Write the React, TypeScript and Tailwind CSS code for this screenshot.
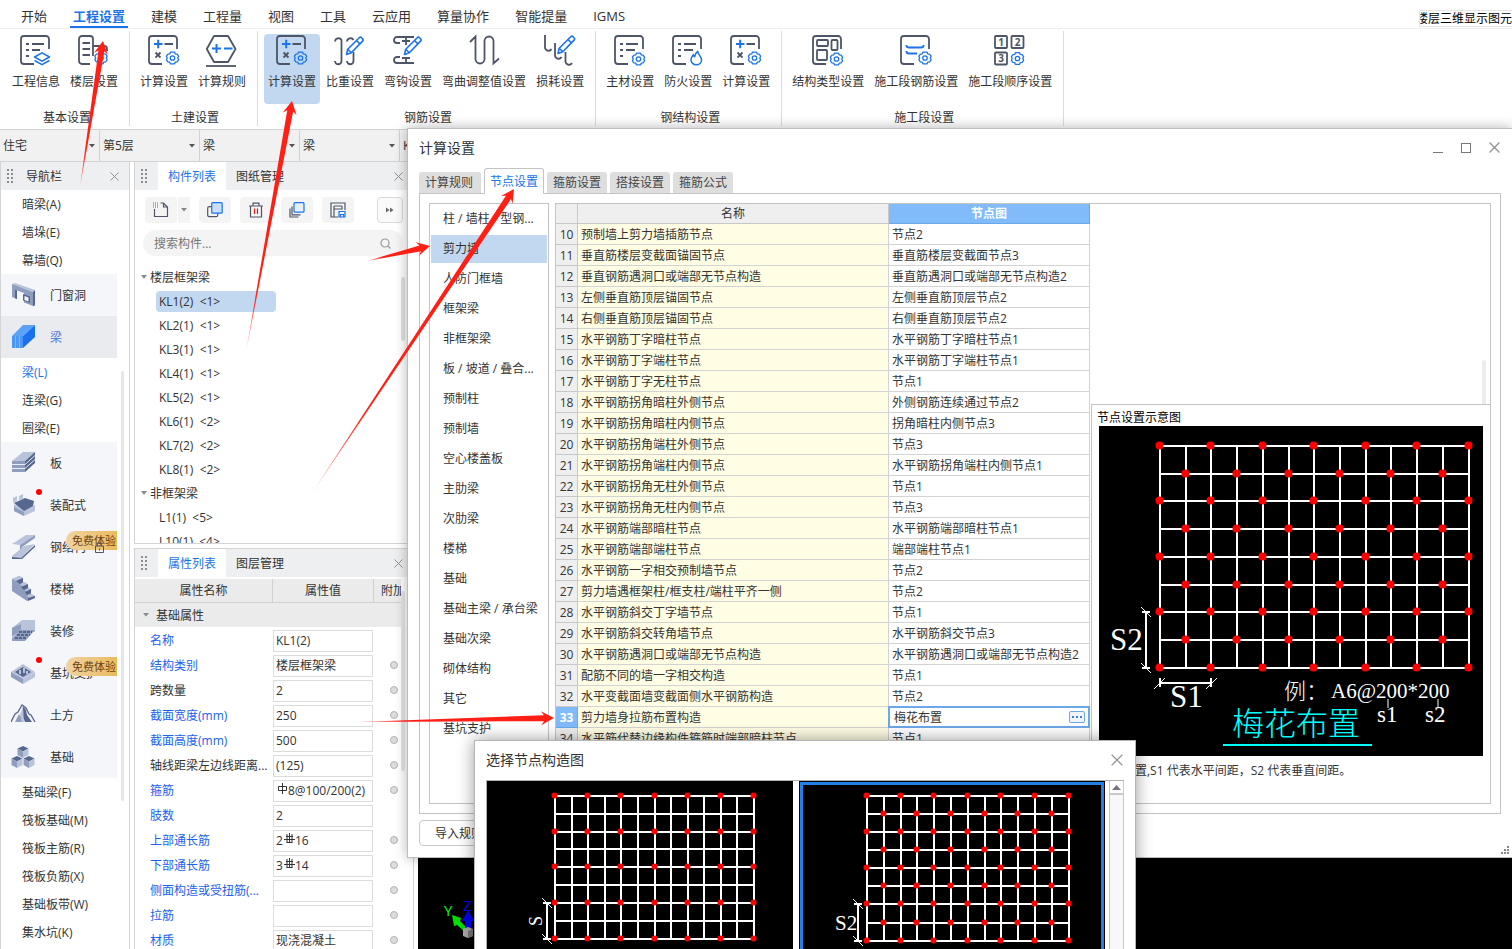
import React from 'react';
import { clsx } from 'clsx';

const INK = '#4d5566';
const BLUE = '#1a73e8';

/* ---------- shared icon parts ---------- */

const Gear: React.FC<{ x: number; y: number }> = ({ x, y }) => (
  <g transform={`translate(${x} ${y})`} stroke={BLUE} strokeWidth="1.3" fill="none" strokeLinejoin="round">
    <path d="M-2.1-5.8h4.2l.7 1.7 1.8.3 1.5 2-.8 1.8.8 1.8-1.5 2-1.8.3-.7 1.7h-4.2l-.7-1.7-1.8-.3-1.5-2 .8-1.8-.8-1.8 1.5-2 1.8-.3z" />
    <circle r="2.2" />
  </g>
);

const Pencil = () => (
  <g stroke={BLUE} fill="#fff" strokeWidth="1.6" strokeLinejoin="round">
    <path d="M12.5 20.5l1.2-5.2L25.5 3.5c1.2-1.2 4.6 2 3.3 3.4L17.3 18.8z" />
    <path d="M22.5 6.5l3.6 3.6M13.7 15.3l3.6 3.5" />
  </g>
);

const Frame = () => <path d="M29 15V5a3 3 0 0 0-3-3H4a3 3 0 0 0-3 3v22a3 3 0 0 0 3 3h10" />;

const Svg32: React.FC<{ children: React.ReactNode }> = ({ children }) => (
  <svg width="32" height="34" viewBox="0 0 32 34" fill="none" stroke={INK} strokeWidth="1.8">
    {children}
  </svg>
);

const InfoIcon = () => (
  <Svg32>
    <Frame />
    <path d="M6 10h3M12 10h12M6 16h3M12 16h8M6 22h3" />
    <path d="M14.500 23l7.500-4.200 7.500 4.200-7.500 4.200z M14.500 26.500l7.500 4.200 7.500-4.200" stroke={BLUE} strokeWidth="1.5" strokeLinejoin="round" />
  </Svg32>
);

const FloorIcon = () => (
  <Svg32>
    <path d="M12 30H4a3 3 0 0 1-3-3V5a3 3 0 0 1 3-3h8a3 3 0 0 1 3 3v17M15 12h11a3 3 0 0 1 3 3v2" />
    <path d="M4.500 9h7.500M4.500 15h7.500M4.500 21h7.500" />
    <Gear x={23} y={24} />
  </Svg32>
);

const CalcIcon = () => (
  <Svg32>
    <Frame />
    <path d="M6 10h8.500M10.200 5.700v8.600" stroke={BLUE} strokeWidth="2" />
    <path d="M16.500 10H25M7.500 18.500l5 5M12.500 18.500l-5 5" />
    <Gear x={24.500} y={24} />
  </Svg32>
);

const RuleIcon = () => (
  <Svg32>
    <path d="M8 2h14l7.500 13L22 28H8L.8 15z" strokeLinejoin="round" />
    <path d="M0 32h30" />
    <path d="M6 14.500h9M10.500 10v9M18 14.500h8.500" stroke={BLUE} strokeWidth="2" />
  </Svg32>
);

const WeightIcon = () => (
  <Svg32>
    <path d="M1 7.500A3.500 3.500 0 0 1 7.500 6v21a3.200 3.200 0 0 1-6.500 0" />
    <path d="M13 7.500A3.500 3.500 0 0 1 19.500 6M19.500 18v9a3.200 3.200 0 0 1-6.500 0" />
    <Pencil />
  </Svg32>
);

const HookIcon = () => (
  <Svg32>
    <path d="M22 3H5a3 3 0 0 0 0 6h3M8 23H5a3 3 0 0 0 0 6h17M14 3v8M10 7h8M14 24v5M10 24h8" />
    <Pencil />
  </Svg32>
);

const BendIcon = () => (
  <Svg32>
    <path d="M2 8l5.500-5.500V25a4.500 4.500 0 0 0 9 0V7a4.500 4.500 0 0 1 9 0v22.500l5.500-5" />
  </Svg32>
);

const LossIcon = () => (
  <Svg32>
    <path d="M1 1v12a3.500 3.500 0 0 0 6.500 2M11 9v12a3.500 3.500 0 0 0 6.500 2M21.500 18v9a3.500 3.500 0 0 0 6.500 2" />
    <g transform="translate(1.500 -1)">
      <Pencil />
    </g>
  </Svg32>
);

const MaterialIcon = () => (
  <Svg32>
    <Frame />
    <path d="M6 10h3M12 10h12M6 16h3M12 16h9M6 22h3" />
    <Gear x={24.500} y={25} />
  </Svg32>
);

const FireIcon = () => (
  <Svg32>
    <Frame />
    <path d="M6 10h3M12 10h12M6 16h3M12 16h9M6 22h3" />
    <path d="M19 26c0-2.500 1.200-4 2.500-5.500 0 1.200.5 2 1.200 2.300.2-2.500 1.300-4.300 3-5.500 0 3 3.800 5 3.800 8.700 0 2.700-2.300 4.800-5.200 4.800S19 28.700 19 26z" stroke={BLUE} strokeWidth="1.5" strokeLinejoin="round" />
  </Svg32>
);

const StructIcon = () => (
  <Svg32>
    <Frame />
    <rect x="5" y="6" width="11" height="6" rx="1" />
    <rect x="19.500" y="6" width="6" height="10" rx="1" />
    <rect x="5" y="16" width="10" height="10" rx="1" />
    <Gear x={24.500} y={25} />
  </Svg32>
);

const StageRebarIcon = () => (
  <Svg32>
    <Frame />
    <path d="M6.500 11c0 2.500 1 2.500 2.500 2.500h12c1.500 0 2.500 0 2.500-2.500M6.500 17c0 2.500 1 2.500 2.500 2.500h8" stroke={BLUE} strokeWidth="2" />
    <Gear x={25} y={24} />
  </Svg32>
);

const StageOrderIcon = () => (
  <Svg32>
    <rect x="1" y="2" width="12" height="12" rx="1" />
    <rect x="17.500" y="2" width="12" height="12" rx="1" />
    <rect x="1" y="18.500" width="12" height="12" rx="1" />
    <g fill={INK} stroke="none" fontSize="10" fontWeight="700" fontFamily="Open Sans, sans-serif" textAnchor="middle">
      <text x="7" y="12">1</text>
      <text x="23.500" y="12">2</text>
      <text x="7" y="28">3</text>
    </g>
    <Gear x={23.500} y={24.500} />
  </Svg32>
);

/* ---------- ribbon ---------- */

const menus = ['开始', '工程设置', '建模', '工程量', '视图', '工具', '云应用', '算量协作', '智能提量', 'IGMS'];

const ribbon = [
  { title: '基本设置', items: [['工程信息', InfoIcon], ['楼层设置', FloorIcon]] },
  { title: '土建设置', items: [['计算设置', CalcIcon], ['计算规则', RuleIcon]] },
  {
    title: '钢筋设置',
    active: '计算设置',
    items: [['计算设置', CalcIcon], ['比重设置', WeightIcon], ['弯钩设置', HookIcon], ['弯曲调整值设置', BendIcon], ['损耗设置', LossIcon]],
  },
  { title: '钢结构设置', items: [['主材设置', MaterialIcon], ['防火设置', FireIcon], ['计算设置', CalcIcon]] },
  { title: '施工段设置', items: [['结构类型设置', StructIcon], ['施工段钢筋设置', StageRebarIcon], ['施工段顺序设置', StageOrderIcon]] },
] as { title: string; active?: string; items: [string, React.FC][] }[];

const MenuBar = () => (
  <nav className="flex h-[29px] shrink-0 items-stretch justify-between border-b border-[#efefef] pl-[18px]">
    <div className="flex gap-5">
      {menus.map((m) => (
        <button
          key={m}
          className={clsx(
            'px-[3px] pt-1.5 text-[13px] leading-5 whitespace-nowrap border-b-2',
            m === '工程设置' ? 'border-[#1a73e8] font-bold text-[#1a73e8]' : 'border-transparent'
          )}
        >
          {m}
        </button>
      ))}
    </div>
    <div className="mt-[10px] flex h-[17px] w-[93px] justify-end overflow-hidden border border-r-0 border-[#e4e4e4] text-xs leading-4 whitespace-nowrap text-black">
      楼层三维显示图元
    </div>
  </nav>
);

const Ribbon = () => (
  <div className="flex h-[100px] shrink-0 pt-0.5 pb-1 pl-0.5">
    {ribbon.map((g) => (
      <section key={g.title} className="flex h-[95px] flex-col justify-between border-r border-[#dcdcdc] pt-[3px] pr-[7px] pl-1.5">
        <div className="flex gap-0.5">
          {g.items.map(([label, Icon]) => (
            <button
              key={label}
              className={clsx('flex h-[70px] flex-col items-center rounded-sm px-1 text-xs leading-4', g.active === label && 'bg-[#c1d8f0]')}
            >
              <Icon />
              <span className="mt-1.5 whitespace-nowrap">{label}</span>
            </button>
          ))}
        </div>
        <h2 className="pl-1 text-center text-xs leading-4">{g.title}</h2>
      </section>
    ))}
  </div>
);

const combos = ['住宅', '第5层', '梁', '梁', 'KL1(2)'];

const ComboBar = () => (
  <div className="flex h-[33px] shrink-0 border-y border-[#d2d2d2] bg-[#f1f1f1]">
    {combos.map((c, i) => (
      <label key={i} className="flex w-[100px] shrink-0 items-center border-r border-[#d2d2d2] pr-1 pl-[3px]">
        <select aria-label={c} className="min-w-0 flex-1 appearance-none bg-transparent text-xs outline-none">
          <option>{c}</option>
        </select>
        <svg width="6" height="4" viewBox="0 0 6 4" fill="#555">
          <path d="M0 0h6L3 3.500z" />
        </svg>
      </label>
    ))}
  </div>
);

/* ---------- left navigation ---------- */

const L = '#b9c3d9';
const M = '#8f9dbf';
const D = '#56678f';

const navIcons: Record<string, React.ReactNode> = {
  门窗洞: (
    <>
      <path d="M1 2l3-1 20 7-2 2z" fill={L} />
      <path d="M1 2l21 8v14l-9-3.500V11L6 8.500V17l-5-2z" fill={M} />
      <path d="M22 10l2-2v15l-2 1.500zM4 8l2 .500V17l-2-.700z" fill={D} />
      <path d="M12 12l7 2.500V21l-7-2.500z" fill={D} />
      <path d="M13.500 14l4 1.500v4l-4-1.500z" fill="#f5f6f9" />
    </>
  ),
  梁: (
    <>
      <path d="M1 12L12 1h12L12 12z" fill="#5aa2f7" />
      <path d="M1 12h11v12H1z" fill="#4a97f5" />
      <path d="M12 12L24 1v12L12 24z" fill="#1a70ec" />
      <path d="M4.500 12v12M8.500 12v12" stroke="#7db8ff" />
    </>
  ),
  板: (
    <>
      <path d="M1 11L12 2h12L14 11z" fill={L} />
      <path d="M1 11h13v11H1z" fill={M} />
      <path d="M14 11l10-9v11l-10 9z" fill={D} />
      <path d="M1 14.500h13l10-9M1 18.500h13l10-9" stroke="#e9edf6" fill="none" />
    </>
  ),
  装配式: (
    <>
      <path d="M3 12l10 5 11-4v6l-11 5-10-5z" fill={L} />
      <path d="M3 15l10 5v4L3 19z" fill={M} />
      <path d="M3 11l11-5 9 3-1 5-9 5z" fill={D} />
      <path d="M2 6l4-2v5l-4 2zM8 4l4-2v5L8 9z" fill={L} />
    </>
  ),
  钢结构: (
    <>
      <path d="M1 10L15 1h9L9 11z" fill={L} />
      <path d="M9 11L24 1v3L11 13v6L9 21z" fill={M} />
      <path d="M1 22L13 12l11-2L10 24H1z" fill={L} />
      <path d="M10 24l14-13v2L11 25H1v-2z" fill={D} />
    </>
  ),
  楼梯: (
    <>
      <path d="M1 3l7-3 4 2v4l4 2v4l4 2v4l4 2-8 5L1 15z" fill={M} />
      <path d="M1 3l7-3 4 2-7 3zM9 8l4-2 4 2-5 3zM13 13l4-2 4 3-5 2zM16 19l4-1 4 3-6 2z" fill={L} />
      <path d="M5 5l7-3v4L9 8zM10 11l7-3v4l-4 2zM14 16l6-3v4l-4 2zM17 25v-3l7-2v2z" fill={D} />
    </>
  ),
  装修: (
    <>
      <path d="M1 10L11 2h13v12H11L1 18z" fill={L} />
      <path d="M1 10l9-4v6l-9 7z" fill={M} />
      <path d="M1 20l9-8h14L14 23H1z" fill={M} />
      <path d="M8 14h13M6 17h13M4 20h12" stroke={D} strokeWidth="1.800" strokeDasharray="3 1" />
    </>
  ),
  基坑支护: (
    <>
      <path d="M0 12l12-8 12 8-12 7z" fill={L} />
      <path d="M4 12l8-5 8 5-8 5z" fill={D} />
      <path d="M0 12l12 7v5L0 17z" fill={M} />
      <path d="M12 19l12-7v5l-12 7z" fill={L} />
      <path d="M8 10h2v4H8zM12 8h2v5h-2zM15 11h2v3h-2z" fill={L} />
    </>
  ),
  土方: (
    <>
      <path d="M0 20l4-8 3-2 4-7 4 3 3 6 2 1 4 7" stroke={D} fill="none" strokeWidth="1.300" />
      <path d="M12 4l3 4 1 5 5 7h-7l-3-7z" fill={D} />
      <path d="M4 20l4-8 2 3 1 5z" fill={M} />
      <path d="M12 6l-3 6 2 8h2z" fill={L} />
    </>
  ),
  基础: (
    <>
      {[[12, 2], [6, 12], [18, 12]].map(([x, y]) => (
        <g key={x} transform={`translate(${x} ${y})`}>
          <path d="M-5.500 2.500L0 0l5.500 2.500L0 5.500z" fill={D} />
          <path d="M-5.500 2.500L0 5.500V12l-5.500-3z" fill={M} />
          <path d="M5.500 2.500L0 5.500V12l5.500-3z" fill={L} />
        </g>
      ))}
    </>
  ),
};

type NavRow = { name: string; leaf?: boolean; dot?: boolean; trial?: boolean; lock?: boolean };

const navRows: NavRow[] = [
  { name: '暗梁(A)', leaf: true },
  { name: '墙垛(E)', leaf: true },
  { name: '幕墙(Q)', leaf: true },
  { name: '门窗洞' },
  { name: '梁' },
  { name: '梁(L)', leaf: true },
  { name: '连梁(G)', leaf: true },
  { name: '圈梁(E)', leaf: true },
  { name: '板' },
  { name: '装配式', dot: true },
  { name: '钢结构', trial: true, lock: true },
  { name: '楼梯' },
  { name: '装修' },
  { name: '基坑支护', dot: true, trial: true },
  { name: '土方' },
  { name: '基础' },
  { name: '基础梁(F)', leaf: true },
  { name: '筏板基础(M)', leaf: true },
  { name: '筏板主筋(R)', leaf: true },
  { name: '筏板负筋(X)', leaf: true },
  { name: '基础板带(W)', leaf: true },
  { name: '集水坑(K)', leaf: true },
];

const Grip = () => (
  <svg width="8" height="14" viewBox="0 0 8 14" fill="#8b8b8b" className="shrink-0">
    {[0, 4, 8, 12].map((y) => (
      <g key={y}>
        <rect y={y} width="2" height="2" />
        <rect x="4" y={y} width="2" height="2" />
      </g>
    ))}
  </svg>
);

const Cross: React.FC<{ size?: number }> = ({ size = 9 }) => (
  <svg width={size} height={size} viewBox="0 0 10 10" stroke="#909090" strokeWidth="1.100">
    <path d="M.5.5l9 9M9.500.5l-9 9" />
  </svg>
);

const NavPanel = () => (
  <aside className="flex w-[130px] shrink-0 flex-col border-x border-[#d4d4d6]">
    <header className="flex h-7 shrink-0 items-center bg-[#eeeff1] pr-2.5 pl-1.5">
      <Grip />
      <h2 className="ml-[11px] flex-1 pt-px text-xs">导航栏</h2>
      <button aria-label="关闭">
        <Cross />
      </button>
    </header>
    <div className="flex min-h-0 flex-1">
      <ul className="w-[116px] overflow-hidden">
        {navRows.map((r) =>
          r.leaf ? (
            <li key={r.name} className={clsx('h-7 pl-[21px] text-xs leading-[29px]', r.name === '梁(L)' && 'text-[#1a73e8]')}>
              {r.name}
            </li>
          ) : (
            <li
              key={r.name}
              className={clsx(
                'relative flex h-[42px] items-center pl-2.5 text-xs whitespace-nowrap',
                r.name === '梁' ? 'bg-[#eaebef] text-[#4a78d8]' : 'bg-[#f5f6f9]'
              )}
            >
              <svg width="25" height="26" viewBox="0 0 25 26" fill="none">
                {navIcons[r.name]}
              </svg>
              <span className="ml-3.5 pt-0.5">{r.name}</span>
              {r.dot && <i className="absolute top-[5px] left-[35px] size-1.5 rounded-full bg-[#ff0000]" />}
              {r.trial && (
                <span className="absolute top-[5px] right-0 h-[19px] w-[51px] rounded-l-full bg-gradient-to-r from-[#f1d3a0] to-[#eabb5c] pl-1.5 text-[11px] leading-5 text-[#6d4311]">
                  免费体验
                </span>
              )}
              {r.lock && (
                <svg width="9" height="11" viewBox="0 0 9 11" fill="none" stroke={INK} className="absolute top-[16px] left-[94px]">
                  <path d="M2.500 4V2.500a2 2 0 0 1 4 0V4M.5 4h8v6.500h-8zM4.500 6.500v2" />
                </svg>
              )}
            </li>
          )
        )}
      </ul>
      <div className="mt-[181px] ml-1 h-[430px] w-[3px] rounded-full bg-[#e6e6e6]" />
    </div>
  </aside>
);

/* ---------- component list ---------- */

const PanelTabs: React.FC<{ tabs: [string, string] }> = ({ tabs }) => (
  <header className="flex h-7 shrink-0 items-center bg-[#eeeff1] pr-2.5 pl-1.5 text-xs">
    <Grip />
    <button className="ml-[9px] h-full bg-white px-2.5 pt-0.5 text-[#1a73e8]">{tabs[0]}</button>
    <button className="ml-2.5 pt-0.5">{tabs[1]}</button>
    <button aria-label="关闭" className="ml-auto">
      <Cross />
    </button>
  </header>
);

const toolBtn = 'flex h-[26px] w-8 items-center justify-center rounded-sm bg-[#f4f4f5]';

const Toolbar = () => (
  <div className="flex h-[26px] items-center pr-2.5">
    <button aria-label="新建" className={toolBtn}>
      <svg width="16" height="16" viewBox="0 0 16 16" fill="none" stroke={INK} strokeWidth="1.200">
        <path d="M1.500 7v7.500h13V5l-4-4H7.500M10.500 1v4h4" />
        <path d="M0 1h5M0 3h5M0 5h5" stroke={BLUE} strokeDasharray="1 1" />
      </svg>
    </button>
    <button aria-label="新建选项" className="ml-px flex h-[26px] w-3 items-center justify-center bg-[#f4f4f5]">
      <svg width="6" height="4" viewBox="0 0 6 4" fill="#888">
        <path d="M0 0h6L3 3.500z" />
      </svg>
    </button>
    <button aria-label="复制" className={clsx(toolBtn, 'ml-[9px]')}>
      <svg width="16" height="16" viewBox="0 0 16 16" strokeWidth="1.200">
        <rect x=".7" y="4.700" width="10" height="10" rx="1.500" fill="none" stroke={INK} />
        <rect x="4.700" y=".7" width="10.500" height="10.500" rx="1" fill="#c9defa" stroke={BLUE} />
      </svg>
    </button>
    <button aria-label="删除" className={clsx(toolBtn, 'ml-[9px]')}>
      <svg width="16" height="16" viewBox="0 0 16 16" fill="none" stroke={INK} strokeWidth="1.200">
        <path d="M1 4h14M5 4V1.200h6V4M2.500 4v11h11V4" />
        <path d="M6.500 6.500v5.500M9.500 6.500v5.500" stroke="#e02020" />
      </svg>
    </button>
    <button aria-label="层间复制" className={clsx(toolBtn, 'ml-[9px]')}>
      <svg width="16" height="16" viewBox="0 0 16 16" strokeWidth="1.200" fill="none" stroke={INK}>
        <path d="M3 4.500v8.300h8.500M1 6.500v8.500h8.500" />
        <rect x="5" y=".7" width="10" height="9.500" rx="1" fill="#e6f0fd" stroke={BLUE} />
      </svg>
    </button>
    <button aria-label="存档" className={clsx(toolBtn, 'ml-[9px]')}>
      <svg width="16" height="16" viewBox="0 0 16 16" fill="none" stroke={INK} strokeWidth="1.200">
        <path d="M15 8V1H1v14h7M4 4v11M4 7h8V4M4 4h8" />
        <path d="M9 9.500h6v5.500H9zM10.500 15v-2.500h3V15" stroke={BLUE} />
      </svg>
    </button>
    <button aria-label="更多" className="ml-auto flex size-[26px] items-center justify-center rounded-sm border border-[#dadada] bg-[#fafafa]">
      <svg width="8" height="6" viewBox="0 0 8 6" fill="#666">
        <path d="M0 .5L3.500 3 0 5.500zM4 .5L7.500 3 4 5.500z" />
      </svg>
    </button>
  </div>
);

const beams = ['KL1(2)  <1>', 'KL2(1)  <1>', 'KL3(1)  <1>', 'KL4(1)  <1>', 'KL5(2)  <1>', 'KL6(1)  <2>', 'KL7(2)  <2>', 'KL8(1)  <2>'];

const TreeGroup: React.FC<{ name: string; items: string[] }> = ({ name, items }) => (
  <li>
    <div className="flex h-6 items-center pl-1.5">
      <svg width="6" height="4" viewBox="0 0 6 4" fill="#8a8a8a">
        <path d="M0 0h6L3 4z" />
      </svg>
      <span className="ml-[3px] pt-0.5">{name}</span>
    </div>
    <ul>
      {items.map((b) => (
        <li key={b} className="flex h-6 items-center pl-[21px]">
          <span className={clsx('h-[21px] w-[120px] rounded-sm pl-[3px] leading-[21px] whitespace-pre', b === beams[0] && 'bg-[#c1d8f0]')}>{b}</span>
        </li>
      ))}
    </ul>
  </li>
);

const ComponentPanel = () => (
  <section className="flex h-[382px] shrink-0 flex-col border border-t-0 border-[#d4d4d6]">
    <PanelTabs tabs={['构件列表', '图纸管理']} />
    <div className="mt-[7px] pl-2.5">
      <Toolbar />
    </div>
    <label className="mt-[7px] mr-2.5 ml-2 flex h-[26px] shrink-0 items-center rounded-full bg-[#f4f4f4] pr-3 pl-[11px]">
      <input type="search" placeholder="搜索构件..." className="min-w-0 flex-1 bg-transparent pt-0.5 text-xs outline-none placeholder:text-[#777]" />
      <svg width="11" height="11" viewBox="0 0 11 11" fill="none" stroke="#999" strokeWidth="1.200">
        <circle cx="5" cy="5" r="4" />
        <path d="M8 8l2.500 2.500" />
      </svg>
    </label>
    <div className="mt-[9px] flex min-h-0 flex-1 justify-between overflow-hidden pr-2">
      <ul className="text-xs">
        <TreeGroup name="楼层框架梁" items={beams} />
        <TreeGroup name="非框架梁" items={['L1(1)  <5>', 'L10(1)  <4>']} />
      </ul>
      <div className="mt-3 h-16 w-1 rounded-full bg-[#e2e2e2]" />
    </div>
  </section>
);

/* ---------- property list ---------- */

type Prop = { name: string; value?: string; lead?: string; mark?: 'plain' | 'ribbed'; blue?: boolean; noFlag?: boolean };

const props: Prop[] = [
  { name: '名称', value: 'KL1(2)', blue: true, noFlag: true },
  { name: '结构类别', value: '楼层框架梁', blue: true },
  { name: '跨数量', value: '2' },
  { name: '截面宽度(mm)', value: '250', blue: true },
  { name: '截面高度(mm)', value: '500', blue: true },
  { name: '轴线距梁左边线距离...', value: '(125)' },
  { name: '箍筋', value: '8@100/200(2)', mark: 'plain', blue: true },
  { name: '肢数', value: '2', blue: true, noFlag: true },
  { name: '上部通长筋', value: '16', lead: '2', mark: 'ribbed', blue: true },
  { name: '下部通长筋', value: '14', lead: '3', mark: 'ribbed', blue: true },
  { name: '侧面构造或受扭筋(...', value: '', blue: true },
  { name: '拉筋', value: '', blue: true },
  { name: '材质', value: '现浇混凝土', blue: true },
];

const PropertyPanel = () => (
  <section className="mt-1 flex min-h-0 flex-1 flex-col overflow-hidden border border-b-0 border-[#d4d4d6]">
    <PanelTabs tabs={['属性列表', '图层管理']} />
    <div className="mt-0.5 flex min-h-0 flex-1 items-start text-xs">
      <table className="w-[266px] table-fixed border-separate border-spacing-0">
        <colgroup>
          <col className="w-[138px]" />
          <col className="w-[101px]" />
          <col />
        </colgroup>
        <thead>
          <tr className="h-6 bg-[#ebebeb]">
            <th className="border-r border-b border-[#d0d0d0] p-0 pt-px font-normal">属性名称</th>
            <th className="border-r border-b border-[#d0d0d0] p-0 pt-px font-normal">属性值</th>
            <th className="overflow-hidden border-b border-[#d0d0d0] p-0 pt-px pl-[7px] text-left font-normal whitespace-nowrap">附加</th>
          </tr>
        </thead>
        <tbody>
          <tr className="h-6 bg-[#ebebeb]">
            <td colSpan={3} className="p-0">
              <div className="flex items-center pl-2">
                <svg width="6" height="4" viewBox="0 0 6 4" fill="#8a8a8a">
                  <path d="M0 0h6L3 3.500z" />
                </svg>
                <span className="ml-[7px] pt-0.5">基础属性</span>
              </div>
            </td>
          </tr>
          {props.map((p, i) => (
            <tr key={p.name} className="h-[25px]">
              <td className={clsx('p-0 pt-0.5 pl-[15px] whitespace-nowrap', p.blue && 'text-[#1a62f0]')}>
                <label htmlFor={`prop-${i}`}>{p.name}</label>
              </td>
              <td className="p-0">
                <div className="mt-0.5 flex h-[22px] w-[100px] items-center border border-[#dcdcdc] bg-white pl-0.5">
                  {p.lead}
                  {p.mark && (
                    <svg width="11" height="11" viewBox="0 0 11 11" fill="none" stroke="#333" className="mb-1 ml-px shrink-0">
                      <path d={p.mark === 'plain' ? 'M1.500 3.500h8v4h-8zM5.500 0v11' : 'M2 3.500h7M0 6.500h11M3 1v8.500M5.500 0v10M8 1v8.500M2.500 9.500h6'} />
                    </svg>
                  )}
                  <input id={`prop-${i}`} defaultValue={p.value} className="min-w-0 flex-1 bg-transparent outline-none" />
                </div>
              </td>
              <td className="overflow-visible p-0">
                {!p.noFlag && (
                  <input
                    type="checkbox"
                    aria-label={`附加 ${p.name}`}
                    className="ml-4 block size-2 appearance-none rounded-full border border-[#b4b4b4] bg-[#dcdcdc]"
                  />
                )}
              </td>
            </tr>
          ))}
        </tbody>
      </table>
      <div className="mt-3 h-[180px] w-1 rounded-full bg-[#e6e6e6]" />
    </div>
  </section>
);

/* ---------- layout diagrams ---------- */

const SERIF = 'Liberation Serif, Noto Sans CJK SC, serif';

const Mesh: React.FC<{ xs: number[]; ys: number[]; r: number; quincunx?: boolean }> = ({ xs, ys, r, quincunx }) => (
  <g>
    <g stroke="#fff" strokeWidth="2">
      {xs.map((x) => (
        <path key={x} d={`M${x} ${ys[0]}V${ys[ys.length - 1]}`} />
      ))}
      {ys.map((y) => (
        <path key={y} d={`M${xs[0] - 1} ${y}H${xs[xs.length - 1] + 1}`} />
      ))}
    </g>
    <g fill="#ff0000">
      {ys.map((y, j) =>
        xs.map((x, i) => {
          const hit = quincunx ? i % 2 === j % 2 : i % 2 === 0 && j % 2 === 0;
          return hit && <circle key={`${i}-${j}`} cx={x - 0.5} cy={y - 0.5} r={r} />;
        })
      )}
    </g>
  </g>
);

const DimV: React.FC<{ x: number; y1: number; y2: number }> = ({ x, y1, y2 }) => (
  <g stroke="#fff">
    <path d={`M${x} ${y1}V${y2}M${x - 4} ${y1}h8M${x - 4} ${y2}h8`} strokeWidth="2" />
    <path d={`M${x - 5} ${y1 - 5}l10 10M${x - 5} ${y2 - 5}l10 10`} />
  </g>
);

const PreviewDiagram = () => (
  <svg width="384" height="330" viewBox="0 0 384 330" className="block bg-black">
    <Mesh xs={[61, 87, 112, 138, 164, 190, 215, 241, 267, 292, 318, 344, 370]} ys={[20, 48, 75, 103, 131, 159, 186, 214, 242]} r={4} quincunx />
    <DimV x={47} y1={186} y2={242} />
    <path d="M61 257H112M61 252v9M112 252v9" stroke="#fff" strokeWidth="2" />
    <path d="M55 263l11-11M107 263l11-11" stroke="#fff" />
    <g fill="#fff" fontFamily={SERIF}>
      <text x="11" y="224" fontSize="31">S2</text>
      <text x="71" y="281" fontSize="31">S1</text>
      <text x="185" y="273" fontSize="22" fontWeight="300">例：</text>
      <text x="232" y="272" fontSize="21">A6@200*200</text>
      <text x="278" y="296" fontSize="23">s1</text>
      <text x="326" y="296" fontSize="23">s2</text>
    </g>
    <path d="M289 273v9M339 273v9" stroke="#fff" />
    <text x="133" y="309" fontSize="32" fontWeight="300" fill="#00ffff" fontFamily="Noto Sans CJK SC, sans-serif">
      梅花布置
    </text>
    <path d="M124 319h149" stroke="#00ffff" strokeWidth="2" />
  </svg>
);

/* ---------- calculation settings window ---------- */

const dialogTabs = ['计算规则', '节点设置', '箍筋设置', '搭接设置', '箍筋公式'];

const kinds = [
  '柱 / 墙柱 / 型钢...', '剪力墙', '人防门框墙', '框架梁', '非框架梁', '板 / 坡道 / 叠合...', '预制柱', '预制墙', '空心楼盖板',
  '主肋梁', '次肋梁', '楼梯', '基础', '基础主梁 / 承台梁', '基础次梁', '砌体结构', '其它', '基坑支护',
];

const nodes: [string, string][] = [
  ['预制墙上剪力墙插筋节点', '节点2'],
  ['垂直筋楼层变截面锚固节点', '垂直筋楼层变截面节点3'],
  ['垂直钢筋遇洞口或端部无节点构造', '垂直筋遇洞口或端部无节点构造2'],
  ['左侧垂直筋顶层锚固节点', '左侧垂直筋顶层节点2'],
  ['右侧垂直筋顶层锚固节点', '右侧垂直筋顶层节点2'],
  ['水平钢筋丁字暗柱节点', '水平钢筋丁字暗柱节点1'],
  ['水平钢筋丁字端柱节点', '水平钢筋丁字端柱节点1'],
  ['水平钢筋丁字无柱节点', '节点1'],
  ['水平钢筋拐角暗柱外侧节点', '外侧钢筋连续通过节点2'],
  ['水平钢筋拐角暗柱内侧节点', '拐角暗柱内侧节点3'],
  ['水平钢筋拐角端柱外侧节点', '节点3'],
  ['水平钢筋拐角端柱内侧节点', '水平钢筋拐角端柱内侧节点1'],
  ['水平钢筋拐角无柱外侧节点', '节点1'],
  ['水平钢筋拐角无柱内侧节点', '节点3'],
  ['水平钢筋端部暗柱节点', '水平钢筋端部暗柱节点1'],
  ['水平钢筋端部端柱节点', '端部端柱节点1'],
  ['水平钢筋一字相交预制墙节点', '节点2'],
  ['剪力墙遇框架柱/框支柱/端柱平齐一侧', '节点2'],
  ['水平钢筋斜交丁字墙节点', '节点1'],
  ['水平钢筋斜交转角墙节点', '水平钢筋斜交节点3'],
  ['水平钢筋遇洞口或端部无节点构造', '水平钢筋遇洞口或端部无节点构造2'],
  ['配筋不同的墙一字相交构造', '节点1'],
  ['水平变截面墙变截面侧水平钢筋构造', '节点2'],
  ['剪力墙身拉筋布置构造', '梅花布置'],
  ['水平筋代替边缘构件箍筋时端部暗柱节点', '节点1'],
];

const NodeTable = () => (
  <table className="w-[534px] shrink-0 table-fixed border-separate border-spacing-0 self-start text-xs leading-[19px]">
    <colgroup>
      <col className="w-[22px]" />
      <col className="w-[311px]" />
      <col className="w-[201px]" />
    </colgroup>
    <thead>
      <tr className="h-5 bg-[#efefef] leading-[18px]">
        <th className="border-r border-b border-[#c8c8c8] p-0" />
        <th className="border-r border-b border-[#c8c8c8] p-0 pt-px font-normal">名称</th>
        <th className="border-r border-b border-[#6ba8e8] bg-[#82bbfa] p-0 pt-px font-bold text-white">节点图</th>
      </tr>
    </thead>
    <tbody>
      {nodes.map(([name, node], i) => {
        const n = i + 10;
        const on = n === 33;
        return (
          <tr key={n} className="h-[21px] whitespace-nowrap">
            <td
              className={clsx(
                'border-r border-b p-0 pt-px text-center',
                on ? 'border-[#6ba8e8] bg-[#82bbfa] font-bold text-white' : 'border-[#c8c8c8] bg-[#efefef]'
              )}
            >
              {n}
            </td>
            <td className="border-r border-b border-[#d3d3d3] bg-[#fffde3] p-0 pt-px pl-[3px]">{name}</td>
            <td className={clsx('border-r border-b border-[#d3d3d3] p-0', !on && 'pt-px pl-[3px]')}>
              {on ? (
                <div className="flex h-5 items-center justify-between pr-1 pl-[5px] outline-2 -outline-offset-1 outline-[#6ba8e8]">
                  <span className="pt-px">{node}</span>
                  <button aria-label="选择节点图" className="flex h-3 w-4 items-center justify-center gap-0.5 rounded-xs border border-[#6ba8e8] bg-[#eef5fe]">
                    <i className="size-0.5 bg-[#3b82e0]" />
                    <i className="size-0.5 bg-[#3b82e0]" />
                    <i className="size-0.5 bg-[#3b82e0]" />
                  </button>
                </div>
              ) : (
                node
              )}
            </td>
          </tr>
        );
      })}
    </tbody>
  </table>
);

const SettingsWindow = () => (
  <section
    role="dialog"
    aria-label="计算设置"
    className="absolute top-[128px] right-0 left-[407px] flex h-[730px] flex-col border border-r-0 border-[#bdbdbd] bg-white pr-[11px] pl-[11px] shadow-[0_0_12px_rgba(0,0,0,0.3)]"
  >
    <header className="mb-0.5 flex h-[37px] shrink-0 items-center justify-between pr-px">
      <h1 className="text-sm">计算设置</h1>
      <div className="flex gap-[18px]">
        <button aria-label="最小化">
          <svg width="10" height="10" stroke="#777" fill="none">
            <path d="M0 9.500h10" />
          </svg>
        </button>
        <button aria-label="最大化">
          <svg width="10" height="10" stroke="#777" fill="none">
            <rect x=".5" y=".5" width="9" height="9" />
          </svg>
        </button>
        <button aria-label="关闭">
          <Cross size={11} />
        </button>
      </div>
    </header>
    <div className="flex shrink-0 items-end gap-[3px] text-xs">
      {dialogTabs.map((t, i) => (
        <button
          key={t}
          className={clsx(
            'rounded-t-[3px] whitespace-nowrap',
            i === 1 ? 'z-10 -mb-px h-[26px] border border-b-0 border-[#c4c4c4] bg-white px-[5px] text-[#1a73e8]' : 'h-[21px] bg-[#dedede] px-1.5 text-[#444]',
            i === 0 && 'pr-2'
          )}
        >
          {t}
        </button>
      ))}
    </div>
    <div className="flex h-[621px] shrink-0 gap-1.5 border border-[#c4c4c4] p-[9px]">
      <ul className="w-[120px] shrink-0 border border-[#c4c4c4] px-px pt-px text-xs">
        {kinds.map((k) => (
          <li key={k} className={clsx('mb-0.5 h-7 overflow-hidden pl-3 leading-7 whitespace-nowrap', k === '剪力墙' && 'bg-[#c1d8f0]')}>
            {k}
          </li>
        ))}
      </ul>
      <div className="flex min-w-0 flex-1 overflow-hidden border border-[#c4c4c4]">
        <NodeTable />
        <div className="ml-px flex min-w-0 flex-1 flex-col justify-end">
          <div className="mr-1 h-11 w-1 self-end rounded-t-full bg-[#ececec]" />
          <figure className="h-[399px] border-t border-l border-[#c4c4c4] pr-1.5 pl-[7px]">
            <h3 className="-ml-0.5 h-[21px] text-xs leading-[25px] text-black">节点设置示意图</h3>
            <PreviewDiagram />
            <figcaption className="pt-[5px] text-xs leading-5 whitespace-nowrap">梅花布置,S1 代表水平间距，S2 代表垂直间距。</figcaption>
          </figure>
        </div>
      </div>
    </div>
    <footer className="flex flex-1 items-start justify-between pt-1.5">
      <button className="h-[26px] rounded-sm border border-[#c8c8c8] px-[15px] pt-px text-xs">导入规则</button>
      <svg width="8" height="8" viewBox="0 0 8 8" fill="#888" className="mr-[-8px] mb-[3px] self-end">
        <path d="M6 0h2v2H6zM3 3h2v2H3zM6 3h2v2H6zM0 6h2v2H0zM3 6h2v2H3zM6 6h2v2H6z" />
      </svg>
    </footer>
  </section>
);

/* ---------- node picker window ---------- */

const PickerWindow = () => (
  <section
    role="dialog"
    aria-label="选择节点构造图"
    className="absolute top-[740px] bottom-0 left-[474px] z-10 flex w-[662px] flex-col border border-b-0 border-[#b5b5b5] bg-white px-[11px] shadow-[0_0_16px_rgba(0,0,0,0.4)]"
  >
    <header className="mb-0.5 flex h-[37px] shrink-0 items-center justify-between pr-px">
      <h1 className="text-sm">选择节点构造图</h1>
      <button aria-label="关闭">
        <Cross size={12} />
      </button>
    </header>
    <div className="flex min-h-0 flex-1 overflow-hidden border-t border-l border-[#b0b0b0]">
      <button className="h-full w-[306px] shrink-0 overflow-hidden bg-black" aria-label="矩形布置">
        <svg width="306" height="240" viewBox="0 0 306 240" className="block">
          <Mesh xs={[68, 85, 101, 118, 134, 151, 168, 184, 201, 217, 234, 250, 267]} ys={[15, 33, 51, 68, 86, 104, 122, 140, 158]} r={3} />
          <DimV x={60} y1={122} y2={158} />
          <text transform="translate(55 145) rotate(-90)" fontSize="18" fill="#fff" fontFamily={SERIF}>
            S
          </text>
        </svg>
      </button>
      <button className="ml-1.5 h-full w-[306px] shrink-0 overflow-hidden border border-b-0 border-black bg-black" aria-label="梅花布置">
        <div className="h-full border-3 border-b-0 border-[#2280e6]">
          <svg width="298" height="236" viewBox="4 4 298 236" className="block">
            <Mesh xs={[68, 85, 102, 118, 135, 152, 169, 186, 202, 219, 236, 253, 270]} ys={[15, 33, 51, 69, 87, 105, 123, 142, 160]} r={3} quincunx />
            <DimV x={59} y1={123} y2={160} />
            <text x="36" y="149" fontSize="21" fill="#fff" fontFamily={SERIF}>
              S2
            </text>
          </svg>
        </div>
      </button>
      <div className="ml-1 flex-1 border-x border-[#c8c8c8] bg-[#f8f8f8]">
        <div className="flex h-3.5 items-center justify-center border-b-2 border-[#c8c8c8] bg-white">
          <svg width="9" height="5" viewBox="0 0 9 5" fill="#777">
            <path d="M0 5h9L4.500 0z" />
          </svg>
        </div>
      </div>
    </div>
  </section>
);

/* ---------- red pointer strokes ---------- */

const pointers: [number, number, number, number][] = [
  [80, 187, 103, 41],
  [246, 352, 292, 101],
  [312, 493, 514, 189],
  [367, 261, 430, 246],
  [357, 722, 554, 718],
];

const Pointers = () => (
  <svg width="600" height="760" viewBox="0 0 600 760" className="pointer-events-none absolute top-0 left-0 z-20">
    <defs>
      <linearGradient id="tail" x1="0" x2="1" y1="0" y2="0">
        <stop offset="0" stopColor="#ff1f14" stopOpacity="0.3" />
        <stop offset="0.25" stopColor="#ff1f14" />
      </linearGradient>
    </defs>
    {pointers.map(([x1, y1, x2, y2]) => {
      const len = Math.hypot(x2 - x1, y2 - y1);
      const deg = (Math.atan2(y2 - y1, x2 - x1) * 180) / Math.PI;
      return (
        <path
          key={x1}
          transform={`translate(${x1} ${y1}) rotate(${deg})`}
          d={`M0 0L${len - 10} -3L${len - 13} -7L${len} 0L${len - 13} 7L${len - 10} 3Z`}
          fill="url(#tail)"
        />
      );
    })}
  </svg>
);

const AxisGizmo = () => (
  <svg width="60" height="60" viewBox="0 0 60 60">
    <g fontSize="15" fontFamily="Open Sans, sans-serif">
      <text x="26" y="31" fill="#00ff00">Y</text>
      <text x="45" y="26" fill="#0000ff">Z</text>
    </g>
    <path d="M34 30l9 3-1 3 7 7-3 3-7-6-3 1z" fill="#00e000" />
    <path d="M50 25l6 11h-3v9h-6v-9h-3z" fill="#0000f0" />
    <path d="M45 44l5-2 5 2v7l-5 2-5-2z" fill="#a8a8a8" />
    <path d="M50 46l5-2v7l-5 2z" fill="#777" />
  </svg>
);

const App: React.FC = () => (
  <div className="relative flex h-screen flex-col overflow-hidden bg-white font-['Open_Sans','Noto_Sans_CJK_SC',sans-serif] text-[#333]">
    <MenuBar />
    <Ribbon />
    <ComboBar />
    <main className="flex min-h-0 flex-1 gap-1">
      <NavPanel />
      <div className="flex w-[280px] shrink-0 flex-col">
        <ComponentPanel />
        <PropertyPanel />
      </div>
      <div className="flex flex-1 items-end bg-black pb-1">
        <AxisGizmo />
      </div>
    </main>
    <SettingsWindow />
    <PickerWindow />
    <Pointers />
  </div>
);

export default App;
